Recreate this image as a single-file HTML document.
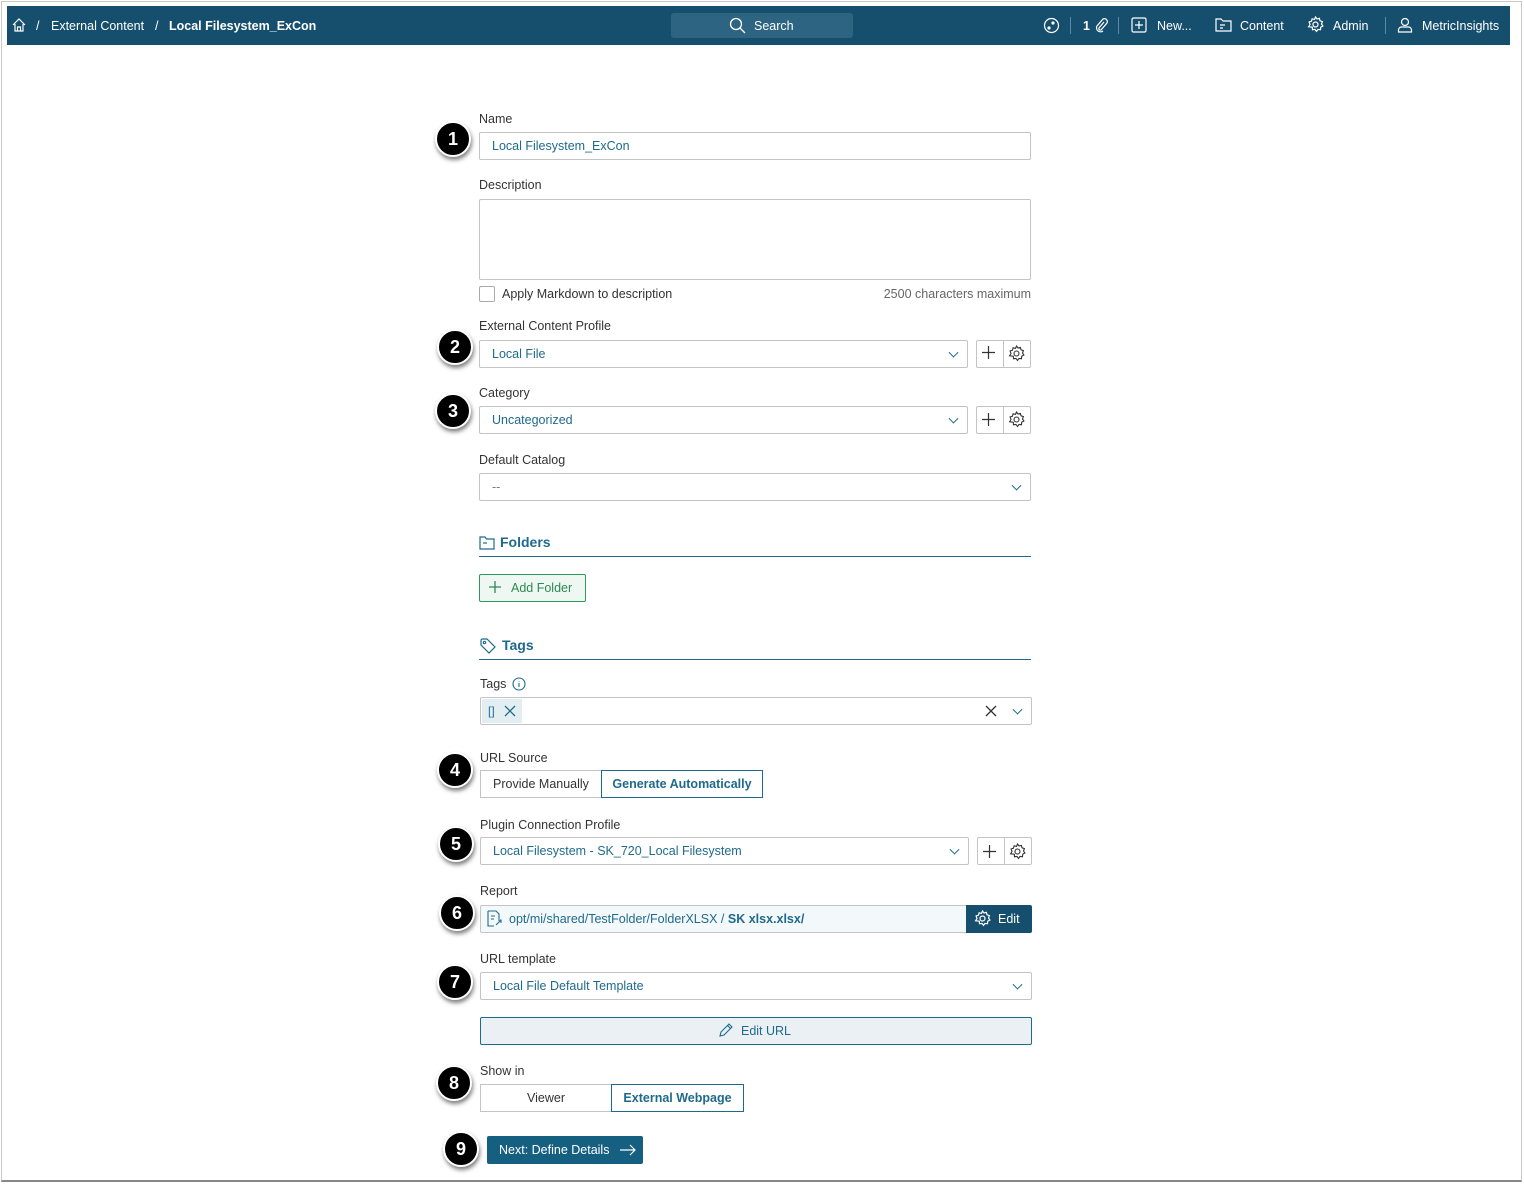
<!DOCTYPE html>
<html><head><meta charset="utf-8"><style>
*{box-sizing:border-box;margin:0;padding:0}
body{width:1524px;height:1184px;background:#fff;font-family:"Liberation Sans",sans-serif;font-size:12.5px;color:#333;position:relative;overflow:hidden}
.frame{position:absolute;left:1px;top:1px;width:1521px;height:1181px;border:1px solid #c8c8c8;border-bottom:2px solid #888}
.nav{position:absolute;left:7px;top:6px;width:1503px;height:39px;background:#164f6e;color:#fff;font-size:12.5px}
.nav span{position:absolute;top:13px;white-space:nowrap}
.a{position:absolute}
.lbl{position:absolute;font-size:12.5px;color:#333}
.inp{position:absolute;border:1px solid #c4c4c4;border-radius:2px;background:#fff;color:#1f6a8c;font-size:12.5px;padding-left:12px;display:flex;align-items:center}
.chev{position:absolute;right:10px;top:50%;width:7px;height:7px;border-right:1.3px solid #1f6a8c;border-bottom:1.3px solid #1f6a8c;transform:translateY(-70%) rotate(45deg)}
.btn2{position:absolute;border:1px solid #c4c4c4;border-radius:2px;background:#fff}
.mk{position:absolute;width:36px;height:36px;border-radius:50%;background:#000;border:2px solid #fff;box-shadow:1px 3px 4px rgba(0,0,0,.5);color:#fff;font-weight:bold;font-size:18px;display:flex;align-items:center;justify-content:center}
.hdr{position:absolute;left:479px;width:552px;border-bottom:1px solid #1f6a8c;color:#1f6a8c;font-weight:bold;font-size:14px;height:16px}
.seg{position:absolute;height:28px;border:1px solid #c4c4c4;display:flex;align-items:center;justify-content:center;font-size:12.5px;background:#fff}
.seg.on{border-color:#1f6a8c;color:#1f6a8c;font-weight:bold}
</style></head><body>
<div class="frame"></div>
<div class="nav">
<svg class="a" style="left:4px;top:11px" width="16" height="16" viewBox="0 0 16 16" fill="none" stroke="#fff" stroke-width="1.2"><path d="M2 8L8 2l6 6M4 7v7h8V7M6.5 14v-4h3v4"/></svg>
<span style="left:29px">/</span><span style="left:44px">External Content</span><span style="left:148px">/</span><span style="left:162px;font-weight:bold">Local Filesystem_ExCon</span>
<div class="a" style="left:664px;top:7px;width:182px;height:25px;background:#2c6482;border-radius:3px"></div>
<svg class="a" style="left:722px;top:11px" width="17" height="17" viewBox="0 0 17 17" fill="none" stroke="#fff" stroke-width="1.3"><circle cx="7" cy="7" r="5.5"/><path d="M11 11l5 5"/></svg>
<span style="left:747px">Search</span>
<svg class="a" style="left:1036px;top:11px" width="17" height="17" viewBox="0 0 17 17" fill="none" stroke="#fff" stroke-width="1.2"><circle cx="8.5" cy="8.5" r="7"/><circle cx="6" cy="11" r="1" fill="#fff"/><circle cx="10" cy="6" r="1" fill="#fff"/></svg>
<div class="a" style="left:1063px;top:11px;width:1px;height:17px;background:#5a8aa5"></div>
<span style="left:1076px;font-weight:bold">1</span>
<svg class="a" style="left:1087px;top:11px" width="14" height="16" viewBox="0 0 14 16" fill="none" stroke="#fff" stroke-width="1.2"><path d="M10 5l-5 6a1.5 1.5 0 002 2l6-7a3 3 0 00-4-4L3 9a4 4 0 006 5"/></svg>
<div class="a" style="left:1111px;top:11px;width:1px;height:17px;background:#5a8aa5"></div>
<svg class="a" style="left:1124px;top:11px" width="16" height="16" viewBox="0 0 16 16" fill="none" stroke="#fff" stroke-width="1.2"><rect x="1" y="1" width="14" height="14" rx="1.5"/><path d="M8 4v8M4 8h8"/></svg>
<span style="left:1150px">New...</span>
<svg class="a" style="left:1208px;top:11px" width="17" height="16" viewBox="0 0 17 16" fill="none" stroke="#fff" stroke-width="1.2"><path d="M1 2h5l2 2h8v10H1z"/><path d="M5 8h5M5 11h3"/></svg>
<span style="left:1233px">Content</span>
<svg class="a" style="left:1300px;top:10px" width="17" height="17" viewBox="0 0 17 17" fill="none" stroke="#fff" stroke-width="1.2"><circle cx="8.5" cy="8.5" r="2.5"/><path d="M8.5 1l1.5 2 2.4-.6.6 2.4 2.4.8-.9 2.4 1.4 2-2.2 1.2-.2 2.5-2.5-.3-1.5 2-1.5-2-2.5.3-.2-2.5L1.6 10.8 3 8.5 2.1 6l2.4-.8.6-2.4 2.4.6z"/></svg>
<span style="left:1326px">Admin</span>
<div class="a" style="left:1378px;top:11px;width:1px;height:17px;background:#5a8aa5"></div>
<svg class="a" style="left:1390px;top:11px" width="16" height="16" viewBox="0 0 16 16" fill="none" stroke="#fff" stroke-width="1.2"><circle cx="8" cy="5" r="3.5"/><path d="M1.5 15v-2a3 3 0 013-3h7a3 3 0 013 3v2z"/></svg>
<span style="left:1415px">MetricInsights</span>
</div>

<div class="lbl" style="left:479px;top:112px">Name</div>
<div class="inp" style="left:479px;top:132px;width:552px;height:28px">Local Filesystem_ExCon</div>
<div class="mk" style="left:435px;top:121px">1</div>

<div class="lbl" style="left:479px;top:178px">Description</div>
<div class="inp" style="left:479px;top:199px;width:552px;height:81px"></div>
<div class="a" style="left:479px;top:286px;width:16px;height:16px;border:1px solid #aaa;border-radius:2px"></div>
<div class="lbl" style="left:502px;top:287px">Apply Markdown to description</div>
<div class="lbl" style="right:493px;top:287px;color:#666">2500 characters maximum</div>

<div class="lbl" style="left:479px;top:319px">External Content Profile</div>
<div class="inp" style="left:479px;top:340px;width:489px;height:28px">Local File<i class="chev"></i></div>
<div class="btn2" style="left:976px;top:340px;width:55px;height:28px"></div>
<div class="mk" style="left:437px;top:329px">2</div>

<div class="lbl" style="left:479px;top:386px">Category</div>
<div class="inp" style="left:479px;top:406px;width:489px;height:28px">Uncategorized<i class="chev"></i></div>
<div class="btn2" style="left:976px;top:406px;width:55px;height:28px"></div>
<div class="mk" style="left:435px;top:393px">3</div>

<div class="lbl" style="left:479px;top:453px">Default Catalog</div>
<div class="inp" style="left:479px;top:473px;width:552px;height:28px;color:#777">--<i class="chev"></i></div>

<div class="hdr" style="top:534px;height:23px;padding-left:21px">Folders</div>
<svg class="a" style="left:479px;top:536px" width="16" height="14" viewBox="0 0 16 14" fill="none" stroke="#1f6a8c" stroke-width="1.2"><path d="M1 1h5l1.5 2H15v10H1z"/><path d="M4 7h4"/></svg>
<div class="a" style="left:479px;top:574px;width:107px;height:28px;border:1px solid #2e9a5e;background:#eef7f1;border-radius:2px;color:#2e8a55;font-size:12.5px;padding-left:31px;line-height:26px">Add Folder</div>
<svg class="a" style="left:489px;top:581px" width="12" height="12" viewBox="0 0 12 12" stroke="#2e8a55" stroke-width="1.3"><path d="M6 0v12M0 6h12"/></svg>

<div class="hdr" style="top:637px;height:23px;padding-left:23px">Tags</div>
<svg class="a" style="left:480px;top:638px" width="16" height="16" viewBox="0 0 16 16" fill="none" stroke="#1f6a8c" stroke-width="1.2"><path d="M1 2v5l8 8 6-6-8-8H2z"/><circle cx="4.5" cy="4.5" r="1.2"/></svg>
<div class="lbl" style="left:480px;top:677px">Tags</div>
<svg class="a" style="left:512px;top:677px" width="14" height="14" viewBox="0 0 14 14" fill="none" stroke="#1f6a8c" stroke-width="1.1"><circle cx="7" cy="7" r="6"/><path d="M7 6v4M7 4v.5"/></svg>
<div class="inp" style="left:480px;top:697px;width:552px;height:28px"><i class="chev"></i></div>
<div class="a" style="left:482px;top:699px;width:40px;height:24px;background:#e3eef3;color:#1f6a8c;font-size:12px;padding:5px 0 0 6px">[]</div>
<svg class="a" style="left:504px;top:705px" width="12" height="12" viewBox="0 0 12 12" stroke="#1f6a8c" stroke-width="1.3"><path d="M1 1l10 10M11 1L1 11"/></svg>
<svg class="a" style="left:985px;top:705px" width="12" height="12" viewBox="0 0 12 12" stroke="#333" stroke-width="1.3"><path d="M1 1l10 10M11 1L1 11"/></svg>

<div class="lbl" style="left:480px;top:751px">URL Source</div>
<div class="seg" style="left:480px;top:770px;width:122px">Provide Manually</div>
<div class="seg on" style="left:601px;top:770px;width:162px">Generate Automatically</div>
<div class="mk" style="left:437px;top:752px">4</div>

<div class="lbl" style="left:480px;top:818px">Plugin Connection Profile</div>
<div class="inp" style="left:480px;top:837px;width:489px;height:28px">Local Filesystem - SK_720_Local Filesystem<i class="chev"></i></div>
<div class="btn2" style="left:977px;top:837px;width:55px;height:28px"></div>
<div class="mk" style="left:438px;top:826px">5</div>

<div class="lbl" style="left:480px;top:884px">Report</div>
<div class="inp" style="left:480px;top:905px;width:490px;height:28px;background:#f3f8fa;padding-left:28px">opt/mi/shared/TestFolder/FolderXLSX /&nbsp;<b>SK xlsx.xlsx/</b></div>
<svg class="a" style="left:487px;top:910px" width="15" height="17" viewBox="0 0 15 17" fill="none" stroke="#1f6a8c" stroke-width="1.1"><path d="M1 1h8l3 3v5M1 1v15h6"/><path d="M4 6h4M4 9h3M9 15l5-5M11 10h3v3"/></svg>
<div class="a" style="left:966px;top:905px;width:66px;height:28px;background:#164f6e;border-radius:0 2px 2px 0;color:#fff;font-size:12.5px;padding:7px 0 0 32px">Edit</div>
<svg class="a" style="left:974px;top:910px" width="17" height="17" viewBox="0 0 17 17" fill="none" stroke="#fff" stroke-width="1.2"><circle cx="8.5" cy="8.5" r="2.5"/><path d="M8.5 1l1.5 2 2.4-.6.6 2.4 2.4.8-.9 2.4 1.4 2-2.2 1.2-.2 2.5-2.5-.3-1.5 2-1.5-2-2.5.3-.2-2.5L1.6 10.8 3 8.5 2.1 6l2.4-.8.6-2.4 2.4.6z"/></svg>
<div class="mk" style="left:439px;top:895px">6</div>

<div class="lbl" style="left:480px;top:952px">URL template</div>
<div class="inp" style="left:480px;top:972px;width:552px;height:28px">Local File Default Template<i class="chev"></i></div>
<div class="mk" style="left:437px;top:964px">7</div>
<div class="a" style="left:480px;top:1017px;width:552px;height:28px;background:#eaf0f4;border:1px solid #1f6a8c;border-radius:2px;color:#1f6a8c;font-size:12.5px;text-align:center;line-height:26px;padding-left:20px">Edit URL</div>
<svg class="a" style="left:718px;top:1023px" width="15" height="15" viewBox="0 0 15 15" fill="none" stroke="#1f6a8c" stroke-width="1.1"><path d="M2 13l1-4 8-8 3 3-8 8zM9.5 2.5l3 3"/></svg>

<div class="lbl" style="left:480px;top:1064px">Show in</div>
<div class="seg" style="left:480px;top:1084px;width:132px">Viewer</div>
<div class="seg on" style="left:611px;top:1084px;width:133px">External Webpage</div>
<div class="mk" style="left:436px;top:1065px">8</div>

<div class="a" style="left:487px;top:1136px;width:156px;height:28px;background:#155f80;border-radius:2px;color:#fff;font-size:12.5px;padding:7px 0 0 12px">Next: Define Details</div>
<svg class="a" style="left:620px;top:1144px" width="16" height="12" viewBox="0 0 16 12" fill="none" stroke="#fff" stroke-width="1.2"><path d="M0 6h15M10 1l5 5-5 5"/></svg>
<div class="mk" style="left:443px;top:1131px">9</div>

<svg class="a" style="left:982px;top:346px" width="13" height="13" viewBox="0 0 13 13" stroke="#333" stroke-width="1.2"><path d="M6.5 0v13M0 6.5h13"/></svg>
<svg class="a" style="left:982px;top:413px" width="13" height="13" viewBox="0 0 13 13" stroke="#333" stroke-width="1.2"><path d="M6.5 0v13M0 6.5h13"/></svg>
<svg class="a" style="left:983px;top:845px" width="13" height="13" viewBox="0 0 13 13" stroke="#333" stroke-width="1.2"><path d="M6.5 0v13M0 6.5h13"/></svg>
<div class="a" style="left:1003px;top:340px;width:1px;height:28px;background:#c4c4c4"></div>
<div class="a" style="left:1003px;top:406px;width:1px;height:28px;background:#c4c4c4"></div>
<div class="a" style="left:1004px;top:837px;width:1px;height:28px;background:#c4c4c4"></div>
<svg class="a" style="left:1008px;top:345px" width="17" height="17" viewBox="0 0 17 17" fill="none" stroke="#333" stroke-width="1.1"><circle cx="8.5" cy="8.5" r="2.5"/><path d="M8.5 1l1.5 2 2.4-.6.6 2.4 2.4.8-.9 2.4 1.4 2-2.2 1.2-.2 2.5-2.5-.3-1.5 2-1.5-2-2.5.3-.2-2.5L1.6 10.8 3 8.5 2.1 6l2.4-.8.6-2.4 2.4.6z"/></svg>
<svg class="a" style="left:1008px;top:411px" width="17" height="17" viewBox="0 0 17 17" fill="none" stroke="#333" stroke-width="1.1"><circle cx="8.5" cy="8.5" r="2.5"/><path d="M8.5 1l1.5 2 2.4-.6.6 2.4 2.4.8-.9 2.4 1.4 2-2.2 1.2-.2 2.5-2.5-.3-1.5 2-1.5-2-2.5.3-.2-2.5L1.6 10.8 3 8.5 2.1 6l2.4-.8.6-2.4 2.4.6z"/></svg>
<svg class="a" style="left:1009px;top:843px" width="17" height="17" viewBox="0 0 17 17" fill="none" stroke="#333" stroke-width="1.1"><circle cx="8.5" cy="8.5" r="2.5"/><path d="M8.5 1l1.5 2 2.4-.6.6 2.4 2.4.8-.9 2.4 1.4 2-2.2 1.2-.2 2.5-2.5-.3-1.5 2-1.5-2-2.5.3-.2-2.5L1.6 10.8 3 8.5 2.1 6l2.4-.8.6-2.4 2.4.6z"/></svg>
</body></html>
